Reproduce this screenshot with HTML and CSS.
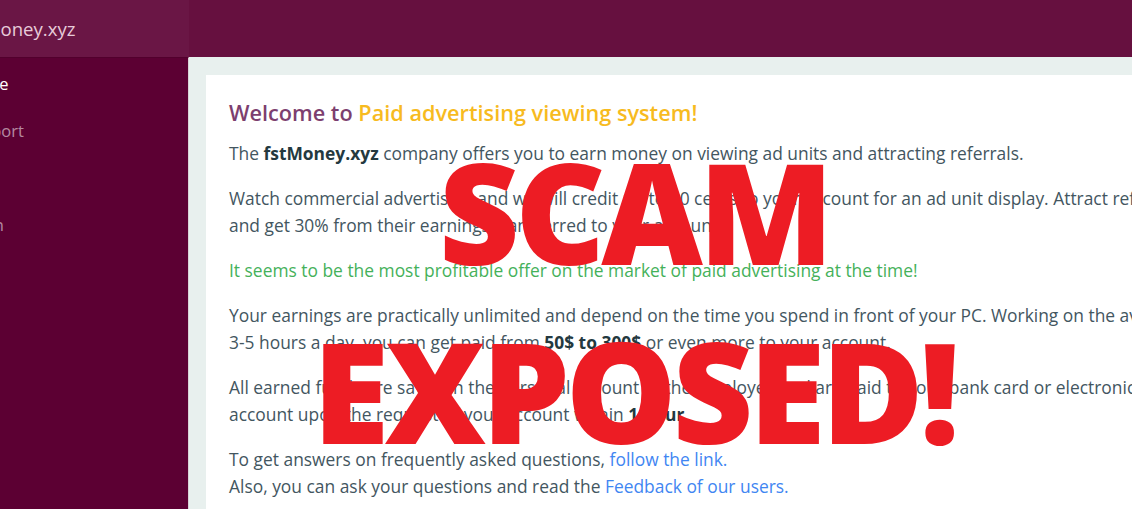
FILE: index.html
```html
<!doctype html>
<html lang="en">
<head>
	<meta charset="UTF-8">
	<meta name="viewport" content="width=device-width, initial-scale=1.0">
	<title>fstMoney.xyz</title>
	<link rel="stylesheet" href="styles.css">
</head>
<body>
	<div class="app">
		<header class="topbar">
			<div class="brand">fstMoney.xyz</div>
		</header>
		<div class="wrap">
			<ul class="sidebar">
				<li class="active">Home</li>
				<li>Support</li>
				<li>FAQ</li>
				<li>Login</li>
			</ul>
			<main class="main">
				<div class="card">
					<h1 class="title">Welcome to <span>Paid advertising viewing system!</span></h1>
					<p>The <b>fstMoney.xyz</b> company offers you to earn money on viewing ad units and attracting referrals.</p>
					<p>Watch commercial advertising and we will credit up to 30 cents to your account for an ad unit display. Attract referrals<br>and get 30% from their earnings transferred to your account.</p>
					<p class="green">It seems to be the most profitable offer on the market of paid advertising at the time!</p>
					<p>Your earnings are practically unlimited and depend on the time you spend in front of your PC. Working on the average<br>3-5 hours a day, you can get paid from <b>50$ to 300$</b> or even more to your account.</p>
					<p>All earned funds are saved in the personal account of the employee and are paid to your bank card or electronic<br>account upon the request of your account within <b>1 hour</b>.</p>
					<p>To get answers on frequently asked questions, <a href="#">follow the link.</a><br>Also, you can ask your questions and read the <a href="#">Feedback of our users.</a></p>
				</div>
				<div class="stamp">SCAM<br>EXPOSED!</div>
			</main>
		</div>
	</div>
</body>
</html>
```

FILE: styles.css
```css
* {
	margin: 0;
	padding: 0;
	box-sizing: border-box;
}
li {
	list-style: none;
}
html, body {
	overflow: hidden;
}
body {
	font-family: "Open Sans", "Noto Sans", sans-serif;
	font-size: 17.4px;
	color: #43565f;
	background: #e8f0ee;
}

/* page is scrolled a bit to the right */
.app {
	margin-left: -60px;
	width: 1250px;
	height: 509px;
}

.topbar {
	height: 57px;
	background-color: #66103f;
	display: flex;
}
.brand {
	flex-shrink: 0;
	width: 249px;
	padding-left: 22px;
	line-height: 57px;
	font-size: 18.6px;
	color: #e7cbd9;
	background-color: #6a1645;
}

.wrap {
	display: flex;
	height: 452px;
}
.sidebar {
	flex-shrink: 0;
	width: 249px;
	background-color: #5c0033;
	border-top: 1px solid #52002d;
	padding-top: 2px;
	border-right: 1px solid #d9d2d6;
}
.sidebar li {
	height: 47px;
	line-height: 47px;
	padding-left: 22px;
	font-size: 16.5px;
	color: rgba(255, 255, 255, 0.55);
}
.sidebar li.active {
	color: #fff;
}

.main {
	position: relative;
	flex: 1;
	padding: 18px 0 0 17px;
	background-color: #e8f0ee;
}
.card {
	background-color: #fff;
	padding: 25px 0 20px 23px;
	width: 1100px;
	height: 500px;
	white-space: nowrap;
}
.title {
	font-size: 21.7px;
	font-weight: 600;
	line-height: 26px;
	color: #7d3f6f;
	margin-bottom: 14px;
}
.title span {
	color: #f7bb1f;
}
.card p {
	line-height: 27px;
	margin-bottom: 18px;
}
.card b {
	color: #24393f;
}
.card .green {
	color: #45b15a;
}
.card a {
	color: #3f86f2;
	text-decoration: none;
}

.stamp {
	position: absolute;
	top: 64px;
	left: 118px;
	width: 654px;
	text-align: center;
	font-size: 140px;
	font-weight: 800;
	line-height: 179px;
	color: #ed1c24;
	letter-spacing: -4.5px;
}
```
